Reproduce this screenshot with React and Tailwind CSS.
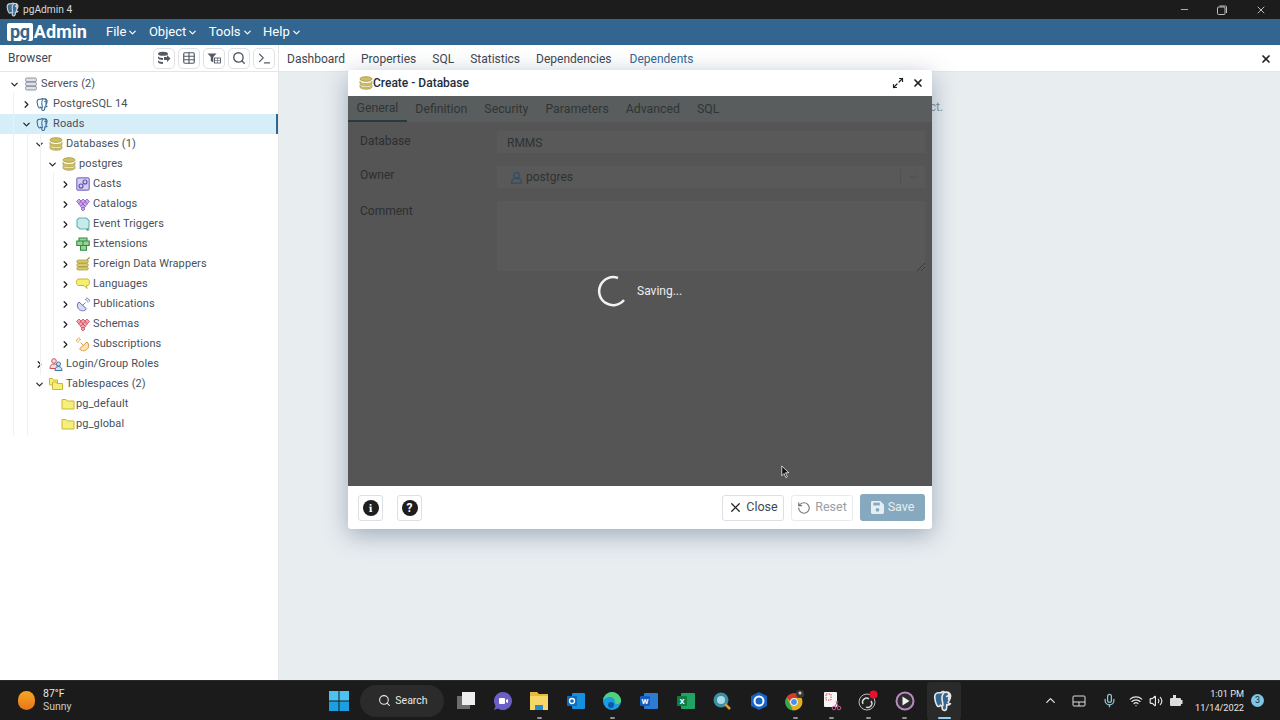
import { ChevronDown, ChevronRight, ChevronUp, X, Search, Table, Terminal, RotateCcw, Mic, Wifi, Volume2, Minus, Maximize2 } from 'lucide-react';

const Elephant = ({ className = 'w-[15px] h-[15px]', fill = 'none', stroke = '#336791' }) => (
    <svg viewBox="0 0 24 24" className={className} fill={fill} stroke={stroke} strokeWidth="1.800" strokeLinejoin="round" strokeLinecap="round">
        <path d="M6 3c-3 0-4.500 2-4 6 .4 3 1.500 7 3 8.500 1 1 2 .5 3-1 .8 1 1.500 1.200 2 1.200V20c0 2 2 2.500 3.500 2 1.500-.5 1.500-2 1.500-3.500v-2.500c2 .5 3.500 0 4-1-1 0-2-.5-2.500-1.500 2-3 3-6 2.500-8-.8-2.500-3.500-3.500-6-3-1-.7-3-.8-4 0C10 2.800 8 3 6 3z" />
        <path d="M12 3c-2 2-2.500 5-2 8 .3 2 .8 3.500.8 6M16.500 3c1.500 2 1.500 4.500.5 7M17 6l-2 1" />
    </svg>
);

const Stack = ({ color = '#cdbf62', dark = '#a39537' }) => (
    <svg viewBox="0 0 14 14" className="w-[14px] h-[14px]">
        <ellipse cx="7" cy="3" rx="6" ry="2.300" fill={color} stroke={dark} strokeWidth="0.800" />
        <path d="M1 5.200c0 1.300 2.700 2.300 6 2.300s6-1 6-2.300v2.500c0 1.300-2.700 2.300-6 2.300s-6-1-6-2.300z" fill={color} stroke={dark} strokeWidth="0.600" />
        <path d="M1 9.200c0 1.300 2.700 2.300 6 2.300s6-1 6-2.300v1.800c0 1.300-2.700 2.300-6 2.300s-6-1-6-2.300z" fill={color} stroke={dark} strokeWidth="0.600" />
    </svg>
);

const Servers = () => (
    <svg viewBox="0 0 14 14" className="w-[14px] h-[14px]" fill="#dfe1e6" stroke="#8d93a3" strokeWidth="1">
        <rect x="1.500" y="1" width="11" height="3.600" rx="1.500" />
        <rect x="1.500" y="5.200" width="11" height="3.600" rx="1.500" />
        <rect x="1.500" y="9.400" width="11" height="3.600" rx="1.500" />
    </svg>
);

const Casts = () => (
    <svg viewBox="0 0 14 14" className="w-[14px] h-[14px]">
        <rect x="0.800" y="0.800" width="12.400" height="12.400" rx="1.500" fill="#d5cff2" stroke="#7f70c6" strokeWidth="1.200" />
        <circle cx="5" cy="9" r="2" fill="none" stroke="#5c4db0" strokeWidth="1.100" />
        <circle cx="9" cy="5" r="2" fill="none" stroke="#5c4db0" strokeWidth="1.100" />
    </svg>
);

// Catalogs and Schemas share the same heart of diamonds shape
const Diamonds = ({ fill, stroke }) => (
    <svg viewBox="0 0 14 14" className="w-[15px] h-[15px]" fill={fill} stroke={stroke} strokeWidth="0.700">
        <path d="M3 1.500 5.500 4 3 6.500.5 4z" />
        <path d="M11 1.500 13.500 4 11 6.500 8.500 4z" />
        <path d="M7 1.500 9.500 4 7 6.500 4.500 4z" />
        <path d="M5 4 7.500 6.500 5 9 2.500 6.500z" />
        <path d="M9 4l2.500 2.500L9 9 6.500 6.500z" />
        <path d="M7 6.500 9.500 9 7 11.500 4.500 9z" />
        <path d="M7 9.500 9 11.500 7 13.500 5 11.500z" />
    </svg>
);

const Triggers = () => (
    <svg viewBox="0 0 14 14" className="w-[14px] h-[14px]" fill="#c6e9e9" stroke="#5fb3b3" strokeWidth="1.100">
        <path d="M3 1h7.500l2.500 2.500v7l-1 1.500H4L1 9.500V3z" />
        <path d="M10 12.800h3.500M11.800 11v3.500" fill="none" stroke="#3f9a9a" strokeWidth="0.900" />
    </svg>
);

const Extensions = () => (
    <svg viewBox="0 0 14 14" className="w-[14px] h-[14px]" fill="#9bd19b" stroke="#2f8b3c" strokeWidth="1.100">
        <path d="M3 1h8v3h2.200v4.500h-2.700v4.800h-6V8.500H.8V4H3z" />
        <path d="M3 4h7.500M4.500 8.500h6M7 4v4.500" fill="none" />
    </svg>
);

const Fdw = () => (
    <svg viewBox="0 0 14 14" className="w-[14px] h-[14px]">
        <rect x="0.800" y="3" width="11.500" height="3" rx="1.500" fill="#d8ca6c" stroke="#a39537" strokeWidth="0.700" />
        <rect x="0.800" y="6.500" width="11.500" height="3" rx="1.500" fill="#d8ca6c" stroke="#a39537" strokeWidth="0.700" />
        <rect x="0.800" y="10" width="11.500" height="3" rx="1.500" fill="#d8ca6c" stroke="#a39537" strokeWidth="0.700" />
        <path d="M11 3l2.500-2.500" stroke="#a39537" strokeWidth="1.300" />
    </svg>
);

const Languages = () => (
    <svg viewBox="0 0 14 14" className="w-[14px] h-[14px]">
        <path d="M3 2h8c1.500 0 2.500 1 2.500 3.200s-1 3.300-2.500 3.300h-.5l.5 3-3-3H3C1.500 8.500.5 7.400.5 5.200S1.500 2 3 2z" fill="#f6ef6e" stroke="#c8b52e" />
    </svg>
);

const Dish = ({ fill, stroke, flip }) => (
    <svg viewBox="0 0 14 14" className={`w-[15px] h-[15px] ${flip ? '-scale-x-100' : ''}`}>
        <path d="M3 4.500c-2.500 2.500-2 6 .5 7.800 2.500 1.700 5.500 1 7-1z" fill={fill} stroke={stroke} />
        <path d="M6.500 8l3-3M9 2c1.500 0 3 1.500 3 3M10 .5c2 0 3.500 1.500 3.500 3.500" fill="none" stroke={stroke} strokeWidth="0.900" />
    </svg>
);

const Roles = () => (
    <svg viewBox="0 0 14 14" className="w-[15px] h-[15px]">
        <circle cx="5" cy="3.500" r="2.300" fill="#f8dcdc" stroke="#c9535f" />
        <path d="M1 11c0-3 1.500-4.500 4-4.500S9 8 9 11z" fill="#f8dcdc" stroke="#c9535f" />
        <circle cx="9.500" cy="6.500" r="2" fill="#cfe3f5" stroke="#3b73ad" />
        <path d="M6 13c0-2.500 1.300-4 3.500-4S13 10.500 13 13z" fill="#cfe3f5" stroke="#3b73ad" />
    </svg>
);

const Folder = ({ double }) => (
    <svg viewBox="0 0 14 14" className="w-[14px] h-[14px]" fill="#f6ef7a" stroke="#c9b836">
        {double && <path d="M.5 1.500h3l1 1.500h4v5h-8z" />}
        <path d={double ? 'M3.500 5h3.500l1 1.500h5.500v6H3.500z' : 'M1 2.500h4l1.200 1.500H13v8H1z'} />
    </svg>
);

const treeRows = [
    { label: 'Servers (2)', depth: 0, open: true, icon: <Servers /> },
    { label: 'PostgreSQL 14', depth: 1, icon: <Elephant /> },
    { label: 'Roads', depth: 1, open: true, selected: true, icon: <Elephant /> },
    { label: 'Databases (1)', depth: 2, open: true, icon: <Stack /> },
    { label: 'postgres', depth: 3, open: true, icon: <Stack /> },
    { label: 'Casts', depth: 4, icon: <Casts /> },
    { label: 'Catalogs', depth: 4, icon: <Diamonds fill="#c9a7e8" stroke="#8348b8" /> },
    { label: 'Event Triggers', depth: 4, icon: <Triggers /> },
    { label: 'Extensions', depth: 4, icon: <Extensions /> },
    { label: 'Foreign Data Wrappers', depth: 4, icon: <Fdw /> },
    { label: 'Languages', depth: 4, icon: <Languages /> },
    { label: 'Publications', depth: 4, icon: <Dish fill="#d7dcf5" stroke="#5f70b8" /> },
    { label: 'Schemas', depth: 4, icon: <Diamonds fill="#f2a3ab" stroke="#c93a4c" /> },
    { label: 'Subscriptions', depth: 4, icon: <Dish fill="#fbe3bd" stroke="#d99a3c" flip /> },
    { label: 'Login/Group Roles', depth: 2, icon: <Roles /> },
    { label: 'Tablespaces (2)', depth: 2, open: true, icon: <Folder double /> },
    { label: 'pg_default', depth: 3, leaf: true, icon: <Folder /> },
    { label: 'pg_global', depth: 3, leaf: true, icon: <Folder /> },
];

const indents = ['pl-[8px]', 'pl-[20px]', 'pl-[33px]', 'pl-[46px]', 'pl-[59px]'];

function TreeRow({ row }) {
    const bg = row.selected ? 'bg-[#d6eef7] border-r-2 border-[#326690]' : '';
    return (
        <div className={`relative h-5 flex items-center ${indents[row.depth]} ${bg}`}>
            {row.leaf ? (
                <span className="w-[11px]" />
            ) : (
                <span className="w-[12px] h-[12px] flex items-center justify-center text-[#222]">
                    {row.open ? <ChevronDown size={11} strokeWidth={2.600} /> : <ChevronRight size={11} strokeWidth={2.600} />}
                </span>
            )}
            <span className={`${row.depth === 4 ? 'ml-[5px]' : 'ml-[4px]'} w-[14px] h-[14px] flex items-center justify-center`}>{row.icon}</span>
            <span className={`${row.leaf ? 'ml-[1px]' : 'ml-[3px]'} text-[11px] tracking-[0.1px] text-[#48505c] whitespace-nowrap`}>{row.label}</span>
        </div>
    );
}

function ToolButton({ children }) {
    return (
        <div className="w-[22px] h-[21px] rounded-[5px] border border-[#dfe1e5] flex items-center justify-center text-[#545b66]">
            {children}
        </div>
    );
}

const navMenus = ['File', 'Object', 'Tools', 'Help'];
const mainTabs = ['Dashboard', 'Properties', 'SQL', 'Statistics', 'Dependencies', 'Dependents'];
const dialogTabs = ['General', 'Definition', 'Security', 'Parameters', 'Advanced', 'SQL'];

function Dialog() {
    return (
        <div className="absolute left-[348px] top-[70px] w-[584px] h-[459px] flex flex-col bg-white rounded-[3px] shadow-[0_6px_24px_rgba(70,90,120,0.45)]">
            <div className="h-[26px] flex items-center pl-[11px] pr-[8px]">
                <Stack />
                <span className="text-[12px] font-medium text-[#222d3a]">Create - Database</span>
                <Maximize2 size={12} strokeWidth={2.400} className="ml-auto text-[#222]" />
                <X size={12} strokeWidth={3.500} className="ml-[8px] text-[#222]" />
            </div>

            <div className="relative flex-1 bg-[#555555] flex flex-col">
                <div className="h-[26px] flex bg-[#5a5d5d] text-[12.300px] text-[#2f3535]">
                    {dialogTabs.map((tab, i) => (
                        <div key={tab} className={`h-full flex items-center px-[8.500px] pt-[1px] ${i === 0 ? 'border-b-2 border-[#263b3d]' : ''}`}>
                            {tab}
                        </div>
                    ))}
                </div>
                <div className="pl-[12px] pr-[7px] pt-[9px] text-[12px] text-[#2b2f31]">
                    <div className="flex h-[22px]">
                        <span className="w-[137px] pt-[1px]">Database</span>
                        <div className="flex-1 bg-[#595959] flex items-center pl-[10px] pt-[2px] text-[#2f3233]">RMMS</div>
                    </div>
                    <div className="flex h-[22px] mt-[13px]">
                        <span className="w-[137px]">Owner</span>
                        <div className="flex-1 bg-[#595959] flex items-center pl-[13px] text-[#2f3233]">
                            <svg viewBox="0 0 14 14" className="w-[13px] h-[13px]" fill="none" stroke="#2f4d66" strokeWidth="1.200">
                                <circle cx="7" cy="4.500" r="3" />
                                <path d="M1.500 13c0-3.500 2-5 5.500-5s5.500 1.500 5.500 5z" />
                            </svg>
                            <span className="ml-[3px]">postgres</span>
                            <span className="ml-auto w-[25px] h-[16px] border-l border-[#515151] flex items-center justify-center text-[#4a4a4a]">
                                <ChevronDown size={12} />
                            </span>
                        </div>
                    </div>
                    <div className="flex h-[70px] mt-[13px]">
                        <span className="w-[137px] pt-[1px]">Comment</span>
                        <div className="flex-1 bg-[#595959] relative">
                            <svg viewBox="0 0 8 8" className="absolute right-0 bottom-0 w-[8px] h-[8px]" stroke="#2f3233" strokeWidth="0.800">
                                <path d="M0 8 8 0M4 8l4-4" />
                            </svg>
                        </div>
                    </div>
                </div>
                <div className="absolute left-[249px] top-[179px] flex items-center">
                    <svg viewBox="0 0 32 32" className="w-[32px] h-[32px]" fill="none" stroke="#f2f2f2" strokeWidth="2.500">
                        <path d="M21 3A14 14 0 1 0 27 25" />
                    </svg>
                    <span className="ml-[8px] text-[12px] text-[#eeeeee]">Saving...</span>
                </div>
            </div>

            <div className="h-[43px] flex items-center pl-[10px] pr-[7px] text-[12px]">
                <div className="w-[25px] h-[26px] rounded-[3px] border border-[#dcdfe3] flex items-center justify-center">
                    <span className="w-[16px] h-[16px] rounded-full bg-[#1e1e1e] text-white flex items-center justify-center font-bold text-[12px] leading-none font-serif">i</span>
                </div>
                <div className="ml-[14px] w-[25px] h-[26px] rounded-[3px] border border-[#dcdfe3] flex items-center justify-center">
                    <span className="w-[16px] h-[16px] rounded-full bg-[#1e1e1e] text-white flex items-center justify-center font-bold text-[12px] leading-none">?</span>
                </div>
                <button className="ml-auto w-[62px] h-[26px] rounded-[3px] border border-[#dcdfe3] flex items-center justify-center gap-[3px] text-[#3f4650] text-[12.500px]">
                    <X size={15} strokeWidth={2} className="text-[#222]" />Close
                </button>
                <button className="ml-[7px] w-[62px] h-[26px] rounded-[3px] border border-[#e8eaec] flex items-center justify-center gap-[4px] text-[#9a9ea3] text-[12.500px]">
                    <RotateCcw size={14} className="text-[#777]" />Reset
                </button>
                <button className="ml-[7px] w-[65px] h-[27px] rounded-[3px] bg-[#86a9bf] flex items-center justify-center gap-[4px] text-[#e6eef3] text-[12.500px]">
                    <svg viewBox="0 0 14 14" className="w-[13px] h-[13px]">
                        <path d="M1.500 0h8.500L14 4v8.500a1.500 1.500 0 0 1-1.500 1.500h-11A1.500 1.500 0 0 1 0 12.500v-11A1.500 1.500 0 0 1 1.500 0z" fill="#e6eef3" />
                        <rect x="2.500" y="1.800" width="7" height="3" fill="#86a9bf" />
                        <circle cx="7" cy="9.500" r="2" fill="#86a9bf" />
                    </svg>
                    Save
                </button>
            </div>
        </div>
    );
}

// taskbar apps drawn small, in order
const taskIcons = [
    { key: 'view', bar: false, el: <svg viewBox="0 0 20 20" className="w-5 h-5"><rect x="1" y="5" width="13" height="13" fill="#6d6d6d" /><rect x="6" y="1" width="13" height="13" fill="#eeeeee" /></svg> },
    { key: 'teams', bar: false, el: <svg viewBox="0 0 20 20" className="w-5 h-5"><path d="M10 1a9 9 0 1 1-5 16.500L1 19l1.500-4A9 9 0 0 1 10 1z" fill="#6b5fc7" /><rect x="6" y="7" width="6" height="6" rx="1" fill="#fff" /><path d="M13 9l2-1v4l-2-1z" fill="#fff" /></svg> },
    { key: 'files', bar: true, el: <svg viewBox="0 0 20 20" className="w-5 h-5"><path d="M1 1h7l2 2h9v3H1z" fill="#e8b93a" /><rect x="1" y="5" width="18" height="14" fill="#f7d767" /><rect x="6" y="14" width="8" height="5" fill="#2b8bd0" /></svg> },
    { key: 'outlook', bar: false, el: <svg viewBox="0 0 20 20" className="w-5 h-5"><rect x="6" y="2" width="13" height="16" rx="1" fill="#1490df" /><rect x="1" y="5" width="10" height="10" rx="1" fill="#0f6cbd" /><circle cx="6" cy="10" r="2.500" fill="none" stroke="#fff" strokeWidth="1.300" /></svg> },
    { key: 'edge', bar: true, el: <svg viewBox="0 0 20 20" className="w-5 h-5"><circle cx="10" cy="10" r="9" fill="#1b9de2" /><path d="M1 10a9 9 0 0 1 18 0c0 2-2 3-4 3s-2-1-2-2c0-3-2-5-5-5-3 0-7 2-7 4z" fill="#52d17c" /><circle cx="9" cy="14" r="3" fill="#0c59a4" /></svg> },
    { key: 'word', bar: false, el: <svg viewBox="0 0 20 20" className="w-5 h-5"><rect x="5" y="2" width="14" height="16" rx="1" fill="#2b7cd3" /><rect x="1" y="5" width="10" height="10" rx="1" fill="#185abd" /><text x="6" y="13" textAnchor="middle" fontSize="8" fontWeight="700" fill="#fff">W</text></svg> },
    { key: 'excel', bar: false, el: <svg viewBox="0 0 20 20" className="w-5 h-5"><rect x="5" y="2" width="14" height="16" rx="1" fill="#21a366" /><rect x="1" y="5" width="10" height="10" rx="1" fill="#107c41" /><text x="6" y="13" textAnchor="middle" fontSize="8" fontWeight="700" fill="#fff">X</text></svg> },
    { key: 'lens', bar: false, el: <svg viewBox="0 0 20 20" className="w-5 h-5"><circle cx="9" cy="9" r="7.500" fill="#3b8ea5" /><circle cx="9" cy="9" r="4" fill="#a9dbe6" /><path d="M13 13l5 5" stroke="#d89b3c" strokeWidth="2.500" /></svg> },
    { key: 'shield', bar: false, el: <svg viewBox="0 0 20 20" className="w-5 h-5"><path d="M10 1l8 4v10l-8 4-8-4V5z" fill="#1763c6" /><circle cx="10" cy="10" r="4.500" fill="none" stroke="#fff" strokeWidth="2" /></svg> },
    { key: 'chrome', bar: true, el: <svg viewBox="0 0 20 20" className="w-5 h-5 overflow-visible"><circle cx="9" cy="11" r="8.500" fill="#e0b020" /><path d="M9 2.500a8.500 8.500 0 0 1 7.500 4.500H9a4 4 0 0 0-4 3L1.500 6.500A8.500 8.500 0 0 1 9 2.500z" fill="#d93a30" /><path d="M1.500 6.500 5 13l3 6.500a8.500 8.500 0 0 1-6.500-13z" fill="#34a853" /><circle cx="9" cy="11" r="3.500" fill="#4c8bf5" stroke="#fff" /><circle cx="15" cy="3" r="4" fill="#3a3a3a" /><circle cx="15" cy="2" r="1.500" fill="#d8d0a8" /></svg> },
    { key: 'snip', bar: true, el: <svg viewBox="0 0 20 20" className="w-5 h-5"><rect x="2" y="1" width="13" height="15" rx="1" fill="#f5f5f5" /><rect x="4" y="3" width="5" height="6" fill="none" stroke="#d9534f" strokeDasharray="1.500 1" /><circle cx="12" cy="17" r="1.800" fill="none" stroke="#d05a9c" /><circle cx="17" cy="17" r="1.800" fill="none" stroke="#d05a9c" /><path d="M13 15l3-5M16 15l-2-5" stroke="#d05a9c" /></svg> },
    { key: 'obs', bar: true, el: <svg viewBox="0 0 20 20" className="w-5 h-5 overflow-visible"><circle cx="9" cy="11" r="8" fill="#222" stroke="#bbb" /><path d="M5 13a4 4 0 0 1 6-5M13 10a4 4 0 0 1-5 6" fill="none" stroke="#ddd" strokeWidth="1.400" /><circle cx="15.500" cy="3.500" r="4" fill="#e8112d" /></svg> },
    { key: 'player', bar: true, el: <svg viewBox="0 0 20 20" className="w-5 h-5"><circle cx="10" cy="10" r="8.500" fill="#2c2c2c" stroke="#b889c0" strokeWidth="2" /><path d="M7.500 5.500l7 4.500-7 4.500z" fill="#f2f2f2" /></svg> },
];

function Taskbar() {
    return (
        <div className="h-10 bg-[#1b1b1b] border-t border-[#2a2a2a] flex items-center text-[#e8e8e8]">
            <div className="w-[330px] flex items-center pl-[18px]">
                <span className="w-[17px] h-[19px] rounded-full bg-gradient-to-b from-[#f5a623] to-[#e8751a]" />
                <div className="ml-[8px] -mt-[2px] text-[10.500px] leading-[13px]">
                    <div>87°F</div>
                    <div className="text-[#c9c9c9]">Sunny</div>
                </div>
            </div>

            <svg viewBox="0 0 20 20" className="w-5 h-5 ml-[-1px]">
                <rect x="0" y="0" width="9.500" height="9.500" fill="#4cc2f1" />
                <rect x="10.500" y="0" width="9.500" height="9.500" fill="#4cc2f1" />
                <rect x="0" y="10.500" width="9.500" height="9.500" fill="#1c9fe0" />
                <rect x="10.500" y="10.500" width="9.500" height="9.500" fill="#1c9fe0" />
            </svg>
            <div className="ml-[11px] w-[84px] h-[32px] rounded-full bg-[#2b2b2b] flex items-center justify-center gap-[4px] text-[10.500px] pl-[2px]">
                <Search size={13} />Search
            </div>
            <div className="ml-[4px] flex">
                {taskIcons.map((icon) => (
                    <div key={icon.key} className="relative w-[36.550px] h-[38px] flex items-center justify-center">
                        {icon.el}
                        {icon.bar && <span className="absolute bottom-[1px] w-[5px] h-[2px] rounded-full bg-[#8f8f8f]" />}
                    </div>
                ))}
                <div className="relative ml-[4px] w-[34px] h-[38px] rounded-[3px] bg-[#2a2a2a] flex items-center justify-center">
                    <Elephant className="w-[22px] h-[22px]" fill="#336791" stroke="#e8e8e8" />
                    <span className="absolute bottom-[1px] w-[13px] h-[2px] rounded-full bg-[#8fd0ea]" />
                </div>
            </div>

            <div className="ml-auto flex items-center pr-[16px]">
                <ChevronUp size={15} />
                <svg viewBox="0 0 14 14" className="w-[14px] h-[14px] ml-[14px]" fill="none" stroke="#ddd" strokeWidth="1">
                    <rect x="1" y="2" width="12" height="10" rx="1" />
                    <path d="M1 8h12M7 8v4" />
                </svg>
                <Mic size={15} className="ml-[16px] text-[#8fc7d8]" />
                <Wifi size={14} className="ml-[12px]" />
                <Volume2 size={14} className="ml-[6px]" />
                <svg viewBox="0 0 14 14" className="w-[14px] h-[14px] ml-[6px]" fill="#ddd">
                    <rect x="1" y="4" width="11" height="8" rx="1" />
                    <rect x="12" y="6" width="1.500" height="4" />
                    <path d="M4 1h3v3H4z" />
                </svg>
                <div className="ml-[9px] w-[52px] text-right text-[9.200px] leading-[14px]">
                    <div>1:01 PM</div>
                    <div>11/14/2022</div>
                </div>
                <span className="ml-[7px] w-[13px] h-[13px] rounded-full bg-[#7cc6e6] text-[#12303f] text-[9px] flex items-center justify-center">3</span>
            </div>
        </div>
    );
}

export default function App() {
    return (
        <div className="relative w-[1280px] h-[720px] overflow-hidden flex flex-col bg-white font-[Roboto,sans-serif]">
            {/* Window title bar */}
            <div className="h-[19px] bg-[#1c1c1c] flex items-center pl-[6px] text-[#d9d9d9]">
                <Elephant className="w-[15px] h-[15px]" fill="#3b6f98" stroke="#cfd8df" />
                <span className="ml-[2px] text-[10.200px]">pgAdmin 4</span>
                <div className="ml-auto flex items-center pr-[13px] text-[#bdbdbd]">
                    <Minus size={11} />
                    <svg viewBox="0 0 10 10" className="ml-[27px] w-[10px] h-[10px]" fill="none" stroke="#bdbdbd" strokeWidth="1">
                        <rect x="0.500" y="2" width="7.500" height="7.500" rx="1" />
                        <path d="M2.500 1h6a1 1 0 0 1 1 1v6" />
                    </svg>
                    <X size={12} className="ml-[28px]" />
                </div>
            </div>

            {/* pgAdmin nav */}
            <div className="h-[26px] bg-[#326690] flex items-center pl-[7px] text-white">
                <div className="flex items-center font-bold text-[18px] leading-none">
                    <span className="bg-white text-[#326690] rounded-[2px] px-[3px] h-[18px] flex items-center tracking-[-0.3px]">pg</span>
                    <span className="ml-[1px] tracking-[0.1px]">Admin</span>
                </div>
                <div className="ml-[19px] flex gap-[10.500px] text-[13px]">
                    {navMenus.map((menu) => (
                        <span key={menu} className="flex items-center gap-[1px]">
                            {menu}<ChevronDown size={11} strokeWidth={2.600} />
                        </span>
                    ))}
                </div>
            </div>

            {/* Browser header and tabs */}
            <div className="h-[27px] flex border-b border-[#e4e6e8]">
                <div className="w-[279px] flex items-center pl-[8px] pr-[3px] border-r border-[#e4e6e8]">
                    <span className="text-[12px] text-[#3f4650]">Browser</span>
                    <div className="ml-auto flex gap-[3px]">
                        <ToolButton>
                            <svg viewBox="0 0 14 14" className="w-[14px] h-[14px]" fill="#545b66">
                                <ellipse cx="6" cy="2.800" rx="5" ry="2" />
                                <path d="M1 5c0 1.200 2.200 2 5 2v2c-2.800 0-5-.8-5-2zM1 9c0 1.200 2.200 2 5 2v2c-2.800 0-5-.8-5-2z" />
                                <path d="M7 6h3V4l3.500 3.500L10 11V9H7z" />
                            </svg>
                        </ToolButton>
                        <ToolButton><Table size={14} /></ToolButton>
                        <ToolButton>
                            <svg viewBox="0 0 14 14" className="w-[14px] h-[14px]" fill="#545b66">
                                <path d="M.5 2.500h9L6.300 6v5.500L3.800 10V6z" />
                                <rect x="7.500" y="7" width="6" height="5" fill="none" stroke="#545b66" strokeWidth="0.900" />
                                <path d="M7.500 9.500h6M10.500 7v5" stroke="#545b66" strokeWidth="0.600" />
                            </svg>
                        </ToolButton>
                        <ToolButton><Search size={14} strokeWidth={2.400} /></ToolButton>
                        <ToolButton><Terminal size={15} /></ToolButton>
                    </div>
                </div>
                <div className="flex-1 flex items-center pl-[8px] pr-[8px] pt-[1px] text-[12px] text-[#3f4650] gap-[16px]">
                    {mainTabs.map((tab) => (
                        <span key={tab} className={tab === 'Dependents' ? 'text-[#326690] ml-[2px]' : ''}>{tab}</span>
                    ))}
                    <X size={12} strokeWidth={3.500} className="ml-auto text-[#222]" />
                </div>
            </div>

            {/* Main area */}
            <div className="flex-1 flex min-h-0">
                <div className="relative w-[279px] border-r border-[#e4e6e8] pt-[2px]">
                    {treeRows.map((row) => <TreeRow key={row.label} row={row} />)}
                    {/* tree guide lines */}
                    <span className="absolute left-[13px] top-[21px] w-px h-[342px] bg-[#eef0f2]" />
                    <span className="absolute left-[27px] top-[61px] w-px h-[302px] bg-[#eef0f2]" />
                    <span className="absolute left-[40px] top-[61px] w-px h-[242px] bg-[#eef0f2]" />
                    <span className="absolute left-[53px] top-[101px] w-px h-[180px] bg-[#eef0f2]" />
                </div>
                <div className="flex-1 bg-[#e8edf0] pt-[26px] text-center text-[12px] text-[#8a9198]">
                    No dependant information is available for the selected object.
                </div>
            </div>

            <Taskbar />
            <Dialog />

            {/* mouse pointer */}
            <svg viewBox="0 0 12 18" className="absolute left-[781px] top-[465px] w-[9px] h-[14px]" fill="#111" stroke="#fff" strokeWidth="1">
                <path d="M1 1v13l3-3 2.500 5.500 2-1L6 10h4.500z" />
            </svg>
        </div>
    );
}
